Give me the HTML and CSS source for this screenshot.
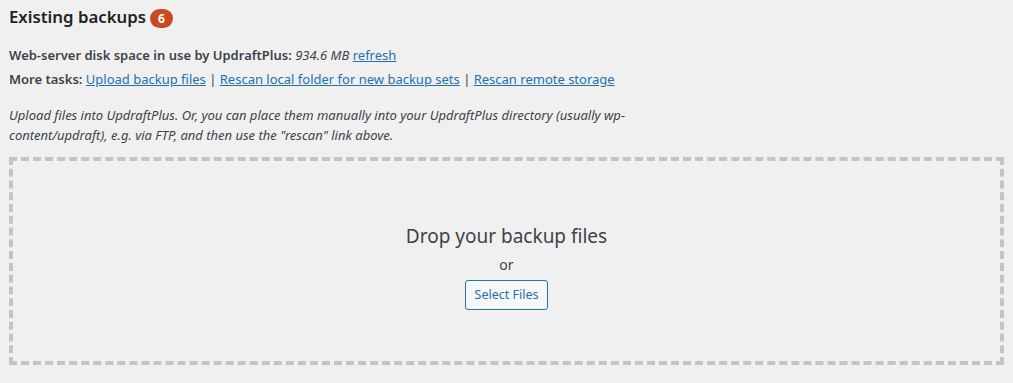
FILE: index.html
```html
<!DOCTYPE html>
<html lang="en">
<head>
<meta charset="utf-8">
<title>Existing backups</title>
<link rel="stylesheet" href="styles.css">
</head>
<body>
<div class="wrap">
  <h2 class="section-title">Existing backups <span class="count-badge">6</span></h2>
  <div class="info-lines">
    <p class="info-line"><strong>Web-server disk space in use by UpdraftPlus:</strong> <em>934.6 MB</em> <a href="#">refresh</a></p>
    <p class="info-line"><strong>More tasks:</strong> <a href="#">Upload backup files</a> | <a href="#">Rescan local folder for new backup sets</a> | <a href="#">Rescan remote storage</a></p>
  </div>
  <p class="help-text">Upload files into UpdraftPlus. Or, you can place them manually into your UpdraftPlus directory (usually wp-content/updraft), e.g. via FTP, and then use the "rescan" link above.</p>
  <div class="drop-zone">
    <h3 class="drop-title">Drop your backup files</h3>
    <p class="drop-or">or</p>
    <button class="button" type="button">Select Files</button>
  </div>
</div>
</body>
</html>
```
FILE: styles.css
```css
html, body {
  margin: 0;
  padding: 0;
  background: #f0f0f1;
}
body {
  font-family: "Noto Sans", "Open Sans", sans-serif;
  font-size: 13px;
  color: #3c434a;
}
.wrap {
  padding: 0 9px;
}
.section-title {
  margin: 5px 0 0;
  font-size: 16.8px;
  line-height: 24px;
  font-weight: 600;
  color: #1d2327;
  display: flex;
  align-items: center;
  gap: 4px;
}
.count-badge {
  display: inline-block;
  min-width: 11px;
  height: 19px;
  padding: 0 6px;
  border-radius: 10px;
  background: #ca4a1f;
  color: #fff;
  font-size: 12px;
  font-weight: 700;
  line-height: 19px;
  text-align: center;
  margin-top: 3px;
}
.info-lines {
  margin-top: 14px;
}
.info-line {
  margin: 0;
  line-height: 24px;
}
.info-line strong {
  font-weight: 600;
}
a {
  color: #2271b1;
  text-decoration: underline;
}
.help-text {
  margin: 15px 0 0;
  max-width: 630px;
  font-style: italic;
  line-height: 19.5px;
}
.drop-zone {
  margin-top: 12px;
  height: 208px;
  box-sizing: border-box;
  border: 4px dashed #c3c4c7;
  padding: 61px 0 0;
  display: flex;
  flex-direction: column;
  align-items: center;
}
.drop-title {
  margin: 0;
  font-size: 19px;
  line-height: 28px;
  font-weight: 400;
  color: #3c434a;
}
.drop-or {
  margin: 5px 0 0;
  font-size: 14px;
  line-height: 20px;
}
.button {
  margin-top: 5px;
  font-family: inherit;
  font-size: 12.5px;
  line-height: 28px;
  min-height: 30px;
  padding: 0 9px;
  color: #2271b1;
  background: #f6f7f7;
  border: 1px solid #2271b1;
  border-radius: 3px;
  cursor: pointer;
}
```
